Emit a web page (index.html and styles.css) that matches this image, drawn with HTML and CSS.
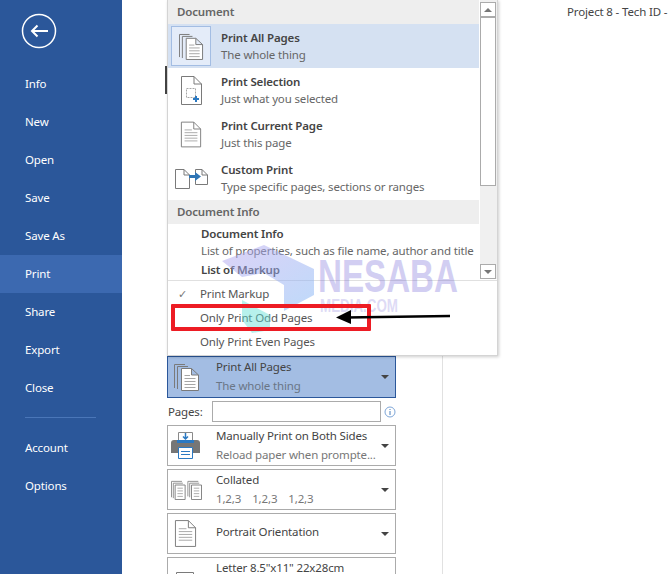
FILE: index.html
```html
<!DOCTYPE html>
<html lang="en">
<head>
<meta charset="utf-8">
<title>Print</title>
<link rel="stylesheet" href="styles.css">
</head>
<body>
<svg class="sprite" width="0" height="0" aria-hidden="true">
  <symbol id="doc" viewBox="0 0 24 30">
    <path d="M1.5 1.500H15L22.500 9V28.500H1.500Z M15 1.500V9H22.500" fill="#fff" stroke="#7a7a7a"/>
    <path d="M5 10H13M5 13H19M5 16H19M5 19H19M5 22H19" stroke="#a6a6a6" fill="none"/>
  </symbol>
  <symbol id="stack" viewBox="0 0 26 30">
    <path d="M.5 26V2.500H11M3.500 27V4.500H14" fill="none" stroke="#7a7a7a"/>
    <path d="M7.500 6.500H17.500L24.500 13V28.500H7.500Z M17.500 6.500V13H24.500" fill="#fff" stroke="#7a7a7a"/>
    <path d="M10.500 13.500H16M10.500 16.500H21.500M10.500 19.500H21.500M10.500 22.500H21.500M10.500 25.500H21.500" stroke="#a6a6a6" fill="none"/>
  </symbol>
</svg>

<div class="app">
  <nav class="nav">
    <svg class="back" width="36" height="36" viewBox="0 0 36 36">
      <circle cx="18" cy="18" r="16.500" fill="none" stroke="#fff" stroke-width="1.500"/>
      <path d="M27 18H11M16.500 12.500L11 18L16.500 23.500" fill="none" stroke="#fff" stroke-width="2"/>
    </svg>
    <ul class="nav-list">
      <li class="nav-item">Info</li>
      <li class="nav-item">New</li>
      <li class="nav-item">Open</li>
      <li class="nav-item">Save</li>
      <li class="nav-item">Save As</li>
      <li class="nav-item nav-item-active">Print</li>
      <li class="nav-item">Share</li>
      <li class="nav-item">Export</li>
      <li class="nav-item">Close</li>
    </ul>
    <div class="nav-sep"></div>
    <ul class="nav-list">
      <li class="nav-item">Account</li>
      <li class="nav-item">Options</li>
    </ul>
  </nav>

  <main class="settings">
    <div class="pick pick-active">
      <svg class="pick-icon" width="26" height="30"><use href="#stack"/></svg>
      <div class="pick-text"><div class="pick-title">Print All Pages</div><div class="pick-sub pick-sub-dark">The whole thing</div></div>
      <span class="caret"></span>
    </div>
    <div class="pages">
      <label class="pages-label">Pages:</label>
      <div class="pages-input"></div>
      <svg width="12" height="12" viewBox="0 0 12 12" class="info">
        <circle cx="6" cy="6" r="5" fill="none" stroke="#7ea6d8"/>
        <path d="M6 5V9M6 3V4" stroke="#4a7ebb"/>
      </svg>
    </div>
    <div class="pick">
      <svg class="pick-icon pick-icon-printer" width="29" height="27" viewBox="0 0 29 27">
        <path d="M7.500 .5H21.500V9H7.500Z" fill="#fff" stroke="#8a8a8a"/>
        <path d="M14.500 1V6.500M12 4.500L14.500 7L17 4.500" fill="none" stroke="#2b79c2" stroke-width="1.500"/>
        <path d="M0 11Q0 8 3 8H26Q29 8 29 11V21H0Z" fill="#767676"/>
        <path d="M6 8H23V11H6Z" fill="#2b79c2"/>
        <path d="M7.500 15.500H21.500V26.500H7.500Z" fill="#fff" stroke="#2b79c2"/>
        <path d="M10 19.500H19M10 22.500H19" stroke="#2b79c2"/>
      </svg>
      <div class="pick-text"><div class="pick-title">Manually Print on Both Sides</div><div class="pick-sub">Reload paper when prompte...</div></div>
      <span class="caret"></span>
    </div>
    <div class="pick">
      <svg class="pick-icon pick-icon-wide" width="33" height="20" viewBox="0 0 34 22">
        <path d="M.5 19V1.500H12M2.500 20V3.500H13M18.500 18V1.500H30M20.500 19V3.500H31" fill="none" stroke="#8a8a8a"/>
        <path d="M4.500 5.500H15.500V21.500H4.500ZM22.500 5.500H33.500V21.500H22.500Z" fill="#fff" stroke="#7a7a7a"/>
        <path d="M7 9H13M7 12H13M7 15H13M7 18H13M25 9H31M25 12H31M25 15H31M25 18H31" stroke="#a6a6a6"/>
      </svg>
      <div class="pick-text"><div class="pick-title">Collated</div><div class="pick-sub pick-nums"><span>1,2,3</span><span>1,2,3</span><span>1,2,3</span></div></div>
      <span class="caret"></span>
    </div>
    <div class="pick">
      <svg class="pick-icon" width="23" height="29"><use href="#doc"/></svg>
      <div class="pick-text pick-text-single"><div class="pick-title">Portrait Orientation</div></div>
      <span class="caret"></span>
    </div>
    <div class="pick">
      <svg class="pick-icon" width="22" height="28" viewBox="0 0 22 28"><path d="M2.500 8.500H19.500V28H2.500Z" fill="#fff" stroke="#7a7a7a"/></svg>
      <div class="pick-text"><div class="pick-title">Letter 8.5"x11" 22x28cm</div></div>
      <span class="caret"></span>
    </div>
  </main>

  <section class="preview">
    <p class="doc-title">Project 8 - Tech ID -</p>
  </section>
</div>

<div class="gutter-mark"></div>

<div class="menu">
  <div class="menu-top">
    <div class="menu-list">
      <div class="menu-head">Document</div>
      <div class="opt opt-selected">
        <div class="opt-icon"><svg width="25" height="29"><use href="#stack"/></svg></div>
        <div class="opt-text"><div class="opt-title">Print All Pages</div><div class="opt-sub">The whole thing</div></div>
      </div>
      <div class="opt">
        <div class="opt-icon">
          <svg width="22" height="29" viewBox="0 0 22 29">
            <path d="M1.500 .5H14L21.500 8V28.500H1.500Z M14 .5V8H21.500" fill="#fff" stroke="#7a7a7a"/>
            <path d="M6.500 12.500H15.500V21.500H6.500Z" fill="none" stroke="#a6a6a6" stroke-dasharray="2 1"/>
            <path d="M16 20V26M13 23H19" stroke="#2b79c2" stroke-width="2"/>
          </svg>
        </div>
        <div class="opt-text"><div class="opt-title">Print Selection</div><div class="opt-sub">Just what you selected</div></div>
      </div>
      <div class="opt">
        <div class="opt-icon"><svg width="22" height="29"><use href="#doc"/></svg></div>
        <div class="opt-text"><div class="opt-title">Print Current Page</div><div class="opt-sub">Just this page</div></div>
      </div>
      <div class="opt">
        <div class="opt-icon">
          <svg width="34" height="23" viewBox="0 0 34 23">
            <path d="M1.500 2.500H10L15.500 8V21.500H1.500Z M10 2.500V8H15.500" fill="#fff" stroke="#7a7a7a"/>
            <path d="M21.500 6V2.500H28L33.500 8V17.500H21.500V13M28 2.500V8H33.500" fill="none" stroke="#7a7a7a"/>
            <path d="M15 8H21V5L27 9.500L21 14V11H15Z" fill="#2f75b5"/>
          </svg>
        </div>
        <div class="opt-text"><div class="opt-title">Custom Print</div><div class="opt-sub">Type specific pages, sections or ranges</div></div>
      </div>
      <div class="menu-head">Document Info</div>
      <div class="opt-plain">
        <div class="opt-title">Document Info</div>
        <div class="opt-sub">List of properties, such as file name, author and title</div>
        <div class="opt-title opt-title-gap">List of Markup</div>
      </div>
    </div>
    <div class="scroll">
      <div class="scroll-btn"><span class="arrow-up"></span></div>
      <div class="scroll-thumb"></div>
      <div class="scroll-track"></div>
      <div class="scroll-btn"><span class="arrow-down"></span></div>
    </div>
  </div>
  <div class="menu-checks">
    <div class="check"><span class="tick">✓</span>Print Markup</div>
    <div class="check">Only Print Odd Pages</div>
    <div class="check">Only Print Even Pages</div>
  </div>
</div>

<svg class="watermark" width="250" height="100" viewBox="0 0 250 100" aria-hidden="true">
  <defs>
    <linearGradient id="wm" x1="0" y1="0" x2="1" y2="1">
      <stop offset="0" stop-color="#b9a5ee"/>
      <stop offset="1" stop-color="#7db4f5"/>
    </linearGradient>
  </defs>
  <path d="M0 16L42 0L92 24V50L62 66V40L42 28L20 32Z" fill="url(#wm)" opacity=".5"/>
  <path d="M20 55L48 70V85L30 88L20 75Z" fill="#5fe0d4" opacity=".45"/>
  <text class="wm-big" x="96" y="47" textLength="140" lengthAdjust="spacingAndGlyphs">NESABA</text>
  <text class="wm-small" x="98" y="67" textLength="78" lengthAdjust="spacingAndGlyphs">MEDIA.COM</text>
</svg>

<div class="redbox"></div>
<svg class="arrow" width="116" height="14" viewBox="0 0 116 14" aria-hidden="true">
  <path d="M114 6L10 7.500" stroke="#000" stroke-width="2.500"/>
  <path d="M0 7.500L15 0V14Z" fill="#000"/>
</svg>
</body>
</html>
```

FILE: styles.css
```css
* { box-sizing: border-box; }
html, body { margin: 0; padding: 0; height: 574px; overflow: hidden; background: #fff; }
body { font-family: "Noto Sans", "Open Sans", sans-serif; font-size: 11.5px; letter-spacing: -.15px; color: #444; position: relative; }
ul { list-style: none; margin: 0; padding: 0; }
.sprite { position: absolute; }

.app { display: flex; height: 574px; }

.nav { width: 122px; flex: none; background: #2b579a; color: #fff; display: flex; flex-direction: column; padding-top: 13px; }
.back { margin: 0 0 16px 21px; display: block; }
.nav-item { height: 38px; line-height: 38px; padding-left: 25px; color: #fff; }
.nav-item-active { background: #3c69b0; }
.nav-sep { height: 1px; width: 71px; background: #4a76b8; margin: 10px 0 11px 25px; }

.settings { width: 321px; flex: none; border-right: 1px solid #e1e1e1; padding: 356px 0 0 45px; display: flex; flex-direction: column; gap: 3px; overflow: hidden; }
.pick { width: 229px; height: 41px; flex: none; border: 1px solid #ababab; display: flex; align-items: center; position: relative; background: #fff; }
.pick-active { background: #a3bde3; border-color: #2b579a; height: 42px; }
.pick-icon { flex: none; margin-left: 6px; }
.pick-icon-wide { margin-left: 2px; }
.pick-icon-printer { margin-left: 3px; }
.pick-text { position: absolute; left: 48px; top: 2px; white-space: nowrap; }
.pick-text-single { top: 10px; }
.pick-title { color: #444; line-height: 16px; }
.pick-sub { color: #777; line-height: 16px; margin-top: 3px; }
.pick-sub-dark { color: #6a7686; }
.pick-nums { display: flex; gap: 11px; }
.caret { position: absolute; right: 6px; top: 18px; width: 0; height: 0; border-left: 4px solid transparent; border-right: 4px solid transparent; border-top: 4px solid #444; }

.pages { display: flex; align-items: center; height: 21px; flex: none; width: 229px; }
.pages-label { width: 45px; flex: none; padding-left: 1px; color: #444; }
.pages-input { width: 169px; height: 21px; border: 1px solid #ababab; background: #fff; }
.info { margin-left: 3px; }

.preview { flex: 1; min-width: 0; }
.doc-title { margin: 3px 0 0 124px; line-height: 18px; white-space: nowrap; color: #444; }

.gutter-mark { position: absolute; left: 165px; top: 66px; width: 2px; height: 28px; background: #444; }

.menu { position: absolute; left: 167px; top: 0; width: 331px; height: 356px; background: #fff; border: 1px solid #d4d4d4; border-top: 0; box-shadow: 1px 1px 3px rgba(0,0,0,.2); }
.menu-top { display: flex; overflow: hidden; border-bottom: 1px solid #e0e0e0; height: 281px; }
.menu-list { width: 311px; flex: none; }
.menu-head { height: 24px; line-height: 24px; background: #eee; padding-left: 9px; font-weight: 600; color: #666; }
.opt { height: 44px; display: flex; align-items: center; }
.opt-selected { background: #d5e1f2; }
.opt-icon { width: 40px; height: 40px; margin: 0 10px 0 3px; flex: none; display: flex; align-items: center; justify-content: center; border: 1px solid transparent; }
.opt-selected .opt-icon { background: #e4ecf9; border-color: #a3bde3; }
.opt-text { padding-top: 2px; }
.opt-title { font-weight: 600; line-height: 16px; color: #444; white-space: nowrap; }
.opt-sub { line-height: 18px; color: #666; white-space: nowrap; }
.opt-plain { padding: 2px 0 0 33px; }
.opt-title-gap { margin-top: 2px; }

.scroll { width: 18px; flex: none; margin-left: 1px; background: #f0f0f0; display: flex; flex-direction: column; height: 279px; padding-top: 2px; }
.scroll-btn { height: 15px; width: 16px; background: #fff; border: 1px solid #ababab; display: flex; align-items: center; justify-content: center; flex: none; }
.scroll-thumb { height: 169px; width: 16px; background: #fff; border: 1px solid #ababab; flex: none; }
.scroll-track { flex: 1; }
.arrow-up { width: 0; height: 0; border-left: 4px solid transparent; border-right: 4px solid transparent; border-bottom: 4px solid #777; }
.arrow-down { width: 0; height: 0; border-left: 4px solid transparent; border-right: 4px solid transparent; border-top: 4px solid #777; }

.menu-checks { padding-top: 1px; }
.check { height: 24px; line-height: 24px; padding-left: 32px; color: #555; position: relative; white-space: nowrap; }
.tick { position: absolute; left: 10px; color: #777; font-size: 11px; }

.watermark { position: absolute; left: 222px; top: 245px; pointer-events: none; }
.wm-big { font-family: "Liberation Sans", sans-serif; font-weight: 700; font-size: 46px; letter-spacing: 0; fill: #6c5fd6; opacity: .3; }
.wm-small { font-family: "Liberation Sans", sans-serif; font-weight: 700; font-size: 19px; letter-spacing: 0; fill: #6c5fd6; opacity: .22; }

.redbox { position: absolute; left: 171px; top: 304px; width: 200px; height: 27px; border: 4px solid #ed1c24; border-radius: 1px; }
.arrow { position: absolute; left: 336px; top: 310px; }
```
